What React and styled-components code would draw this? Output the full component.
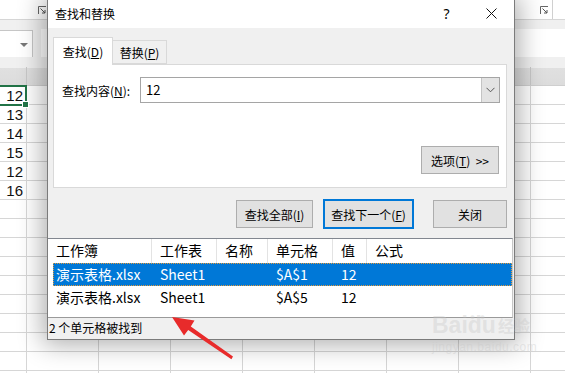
import styled, { createGlobalStyle } from 'styled-components';

const GlobalStyle = createGlobalStyle`
  html, body {
    margin: 0;
    padding: 0;
  }
  body {
    width: 565px;
    height: 373px;
    overflow: hidden;
    background: #fff;
    font-family: "Noto Sans CJK SC", "Noto Sans", sans-serif;
  }
`;

const sheetValues = ['12', '13', '14', '15', '12', '16', '', '', '', '', '', '', '', '', '', ''];
const columns = [27, 72, 72, 72, 72, 72, 72, 72, 72];

const listColumns = [
  { key: 'book', label: '工作簿', width: 104 },
  { key: 'sheet', label: '工作表', width: 65 },
  { key: 'name', label: '名称', width: 51 },
  { key: 'cell', label: '单元格', width: 65 },
  { key: 'value', label: '值', width: 34 },
  { key: 'formula', label: '公式', width: 145 },
];

const results = [
  { id: 1, book: '演示表格.xlsx', sheet: 'Sheet1', name: '', cell: '$A$1', value: '12', formula: '' },
  { id: 2, book: '演示表格.xlsx', sheet: 'Sheet1', name: '', cell: '$A$5', value: '12', formula: '' },
];

function Launcher() {
  return (
    <svg width="9" height="9" viewBox="0 0 9 9">
      <path d="M0.5 8V0.5H8" fill="none" stroke="#666" />
      <path d="M2.5 2.5L7 7M7 4V7H4" fill="none" stroke="#555" />
    </svg>
  );
}

function App() {
  return (
    <>
      <GlobalStyle />
      <Page>
        <Sheet>
          <Ribbon>
            <LauncherBox $left>
              <Launcher />
            </LauncherBox>
            <LauncherBox>
              <Launcher />
            </LauncherBox>
            <RibbonSep />
          </Ribbon>
          <FormulaRow>
            <NameBox>
              <NameArrow />
            </NameBox>
            <FormulaBar />
          </FormulaRow>
          <HeaderRow>
            {columns.map((w, i) => (
              <HeaderCell key={i} style={{ width: w }} />
            ))}
          </HeaderRow>
          {sheetValues.map((v, r) => (
            <GridRow key={r}>
              {columns.map((w, c) => (
                <GridCell key={c} style={{ width: w }} $active={r === 0 && c === 0}>
                  {c === 0 ? v : ''}
                </GridCell>
              ))}
            </GridRow>
          ))}
        </Sheet>

        <Dialog>
          <TitleBar>
            <Title>查找和替换</Title>
            <TitleButton>?</TitleButton>
            <TitleButton>
              <svg width="11" height="11" viewBox="0 0 11 11">
                <path d="M0.5 0.5L10.5 10.5M10.5 0.5L0.5 10.5" stroke="#111" strokeWidth="1" />
              </svg>
            </TitleButton>
          </TitleBar>

          <Upper>
            <Tabs>
              <Tab $active>
                查找(<u>D</u>)
              </Tab>
              <Tab>
                替换(<u>P</u>)
              </Tab>
            </Tabs>

            <Panel>
              <SearchRow>
                <Label>
                  查找内容(<u>N</u>):
                </Label>
                <Combo>
                  <ComboText>12</ComboText>
                  <ComboButton>
                    <svg width="9" height="6" viewBox="0 0 9 6">
                      <path d="M0.5 0.8L4.5 4.8L8.5 0.8" fill="none" stroke="#555" />
                    </svg>
                  </ComboButton>
                </Combo>
              </SearchRow>
              <OptionsRow>
                <Button $w={78}>
                  选项(<u>T</u>)&nbsp;&nbsp;&gt;&gt;
                </Button>
              </OptionsRow>
            </Panel>

            <ButtonRow>
              <Button $w={77}>
                查找全部(<u>I</u>)
              </Button>
              <Button $w={91} $focused>
                查找下一个(<u>F</u>)
              </Button>
              <Button $w={74} $gap={19}>
                关闭
              </Button>
            </ButtonRow>
          </Upper>

          <ResultList>
            <ListHeader>
              {listColumns.map((col) => (
                <HeadCell key={col.key} $w={col.width}>
                  {col.label}
                </HeadCell>
              ))}
            </ListHeader>
            {results.map((row, i) => (
              <ListRow key={row.id} $selected={i === 0}>
                {listColumns.map((col, c) => (
                  <RowCell key={col.key} $w={c === 0 ? col.width - 5 : col.width} $first={c === 0}>
                    {row[col.key]}
                  </RowCell>
                ))}
              </ListRow>
            ))}
          </ResultList>

          <StatusBar>2 个单元格被找到</StatusBar>
        </Dialog>

        <Watermark>
          <WmTop>
            <span>Bai</span>
            <WmPaw>du</WmPaw>
            <WmCn>经验</WmCn>
          </WmTop>
          <WmUrl>jingyan.baidu.com</WmUrl>
        </Watermark>

        <ArrowLayer width="565" height="373" viewBox="0 0 565 373">
          <polygon
            points="172,317 194.5,320.5 190.8,326.4 233,356.6 231.4,359.2 188.2,330 184,335.5"
            fill="#e82b2b"
          />
        </ArrowLayer>
      </Page>
    </>
  );
}

const Page = styled.div`
  position: relative;
  width: 565px;
  height: 373px;
  overflow: hidden;
`;

const Sheet = styled.div`
  display: flex;
  flex-direction: column;
  width: 565px;
`;

const Ribbon = styled.div`
  height: 19px;
  border-bottom: 1px solid #d6d6d6;
  display: flex;
  align-items: center;
  background: #fff;
`;

const LauncherBox = styled.div`
  display: flex;
  margin-left: ${(p) => (p.$left ? '38px' : 'auto')};
  margin-top: 2px;
`;

const RibbonSep = styled.div`
  width: 1px;
  height: 19px;
  background: #d0d0d0;
  margin: 0 12px 0 3px;
`;

const FormulaRow = styled.div`
  height: 37px;
  background: #f0f0f0;
  display: flex;
  align-items: flex-end;
`;

const NameBox = styled.div`
  position: relative;
  width: 33px;
  height: 27px;
  background: #fff;
  border: 1px solid #c6c6c6;
  border-left: none;
  border-bottom: none;
  box-sizing: border-box;
`;

const NameArrow = styled.div`
  position: absolute;
  left: 20px;
  top: 12px;
  border-left: 4px solid transparent;
  border-right: 4px solid transparent;
  border-top: 4px solid #777;
`;

const FormulaBar = styled.div`
  flex: 1;
  height: 28px;
  margin-left: 8px;
  background: #fff;
`;

const HeaderRow = styled.div`
  height: 29px;
  display: flex;
  align-items: flex-end;
  background: linear-gradient(#f0f0f0 0, #f0f0f0 11px, #e0e0e0 11px, #dcdcdc 100%);
  border-bottom: 1px solid #cfcfcf;
  box-sizing: border-box;
`;

const HeaderCell = styled.div`
  flex: none;
  height: 18px;
  border-right: 1px solid #c8c8c8;
  box-sizing: border-box;
`;

const GridRow = styled.div`
  display: flex;
  height: 19px;
`;

const GridCell = styled.div`
  position: relative;
  flex: none;
  height: 19px;
  box-sizing: border-box;
  border-right: 1px solid #d6d6d6;
  border-bottom: 1px solid #d6d6d6;
  font-family: "Liberation Sans", Arial, sans-serif;
  font-size: 15px;
  line-height: 19px;
  color: #111;
  text-align: right;
  padding-right: 3px;

  ${(p) =>
    p.$active &&
    `
    &::after {
      content: '';
      position: absolute;
      left: -3px;
      top: -1px;
      right: -1px;
      bottom: -2px;
      border: 2px solid #217346;
    }
    &::before {
      content: '';
      position: absolute;
      right: -3px;
      bottom: -4px;
      width: 5px;
      height: 5px;
      background: #217346;
      border: 1px solid #fff;
      z-index: 1;
    }
  `}
`;

const Dialog = styled.div`
  position: absolute;
  left: 47px;
  top: 0;
  width: 468px;
  height: 340px;
  box-sizing: border-box;
  border: 1px solid #7b7b7b;
  border-top: none;
  background: #f0f0f0;
  box-shadow: 0 0 24px 4px rgba(0, 0, 0, 0.33);
  display: flex;
  flex-direction: column;
  font-size: 12px;
  color: #000;
`;

const TitleBar = styled.div`
  height: 28px;
  background: #fff;
  display: flex;
  align-items: center;
  padding-left: 7px;
`;

const Title = styled.div`
  flex: 1;
  font-size: 12px;
  margin-top: -1px;
`;

const TitleButton = styled.div`
  width: 45px;
  height: 28px;
  display: flex;
  align-items: center;
  justify-content: center;
  font-family: "Noto Sans", sans-serif;
  font-size: 14px;
  margin-top: -2px;
`;

const Upper = styled.div`
  display: flex;
  flex-direction: column;
  padding: 9px 7px 0 5px;
`;

const Tabs = styled.div`
  display: flex;
  align-items: flex-end;
  height: 27px;
`;

const Tab = styled.div`
  position: relative;
  box-sizing: border-box;
  display: flex;
  align-items: center;
  justify-content: center;
  width: ${(p) => (p.$active ? '60px' : '54px')};
  height: ${(p) => (p.$active ? '28px' : '24px')};
  margin-bottom: ${(p) => (p.$active ? '-1px' : '0')};
  background: ${(p) => (p.$active ? '#fff' : '#f0f0f0')};
  border: 1px solid #d9d9d9;
  border-bottom: ${(p) => (p.$active ? 'none' : '1px solid #d9d9d9')};
  border-left: ${(p) => (p.$active ? '1px solid #d9d9d9' : 'none')};
  z-index: ${(p) => (p.$active ? 1 : 0)};
  padding-top: ${(p) => (p.$active ? '0' : '1px')};
  font-size: 12px;
`;

const Panel = styled.div`
  height: 124px;
  box-sizing: border-box;
  background: #fff;
  border: 1px solid #d9d9d9;
  padding: 12px 6px 0 8px;
  display: flex;
  flex-direction: column;
`;

const SearchRow = styled.div`
  display: flex;
  align-items: center;
  height: 26px;
`;

const Label = styled.div`
  width: 78px;
  flex: none;
  font-size: 12px;
`;

const Combo = styled.div`
  flex: 1;
  height: 26px;
  box-sizing: border-box;
  border: 1px solid #a5a5a5;
  display: flex;
  background: #fff;
`;

const ComboText = styled.div`
  flex: 1;
  padding-left: 5px;
  font-size: 13px;
  line-height: 23px;
`;

const ComboButton = styled.div`
  width: 17px;
  background: #e3e3e3;
  border-left: 1px solid #c4c4c4;
  display: flex;
  align-items: center;
  justify-content: center;
`;

const OptionsRow = styled.div`
  display: flex;
  justify-content: flex-end;
  margin-top: 43px;
  padding-right: 1px;
`;

const Button = styled.div`
  width: ${(p) => p.$w}px;
  height: ${(p) => (p.$focused ? '30px' : '28px')};
  box-sizing: border-box;
  margin-left: ${(p) => (p.$gap ? `${p.$gap}px` : '10px')};
  background: #e1e1e1;
  border: ${(p) => (p.$focused ? '2px solid #0078d7' : '1px solid #adadad')};
  display: flex;
  align-items: center;
  justify-content: center;
  font-size: 12px;
  white-space: nowrap;
`;

const ButtonRow = styled.div`
  display: flex;
  justify-content: flex-end;
  align-items: center;
  height: 30px;
  margin-top: 11px;
`;

const ResultList = styled.div`
  margin-top: 9px;
  height: 80px;
  width: 465px;
  box-sizing: border-box;
  background: #fff;
  border-top: 1px solid #828790;
  border-bottom: 1px solid #9a9a9a;
  border-right: 1px solid #c6c6c6;
  display: flex;
  flex-direction: column;
  font-size: 14px;
`;

const ListHeader = styled.div`
  display: flex;
  height: 24px;
  flex: none;
`;

const HeadCell = styled.div`
  width: ${(p) => p.$w}px;
  flex: none;
  box-sizing: border-box;
  padding-left: 8px;
  border-right: 1px solid #e3e3e3;
  line-height: 23px;
  &:last-child {
    border-right: none;
  }
`;

const ListRow = styled.div`
  display: flex;
  height: 23px;
  flex: none;
  margin-left: 5px;
  box-sizing: border-box;
  background: ${(p) => (p.$selected ? '#0078d7' : 'transparent')};
  color: ${(p) => (p.$selected ? '#fff' : '#000')};
  border: 1px dotted ${(p) => (p.$selected ? '#e59a3a' : 'transparent')};
`;

const RowCell = styled.div`
  width: ${(p) => p.$w}px;
  flex: none;
  box-sizing: border-box;
  padding-left: ${(p) => (p.$first ? '2px' : '7px')};
  line-height: 20px;
  white-space: nowrap;
`;

const StatusBar = styled.div`
  height: 21px;
  padding-left: 1px;
  line-height: 20px;
  font-size: 12px;
`;

const Watermark = styled.div`
  position: absolute;
  left: 432px;
  top: 312px;
  color: rgba(200, 200, 200, 0.4);
  pointer-events: none;
`;

const WmTop = styled.div`
  display: flex;
  align-items: flex-end;
  font-family: "Liberation Sans", Arial, sans-serif;
  font-weight: bold;
  font-size: 23px;
  line-height: 26px;
`;

const WmPaw = styled.span`
  position: relative;
  &::before {
    content: '● ●';
    position: absolute;
    left: 2px;
    top: -8px;
    font-size: 9px;
    letter-spacing: 1px;
  }
`;

const WmCn = styled.span`
  font-size: 16px;
  margin-left: 2px;
  font-family: "Noto Sans CJK SC", sans-serif;
`;

const WmUrl = styled.div`
  font-family: "Liberation Sans", Arial, sans-serif;
  font-size: 12px;
  margin-top: 2px;
  letter-spacing: 0.5px;
`;

const ArrowLayer = styled.svg`
  position: absolute;
  left: 0;
  top: 0;
  pointer-events: none;
`;

export default App;
